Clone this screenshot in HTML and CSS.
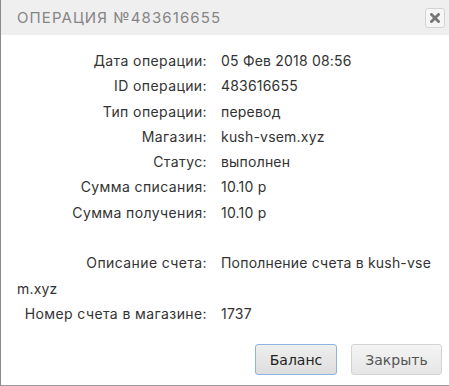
FILE: index.html
```html
<!DOCTYPE html>
<html>
<head>
<meta charset="utf-8">
<link rel="stylesheet" href="styles.css">
</head>
<body>
<div class="dialog">
  <div class="titlebar">
    <span class="title">ОПЕРАЦИЯ №483616655</span>
    <button class="close" aria-label="close"><svg width="10" height="10" viewBox="0 0 10 10"><path d="M1.5 1.5 L8.5 8.5 M8.5 1.5 L1.5 8.5" stroke="#777" stroke-width="2.8" stroke-linecap="square"/></svg></button>
  </div>
  <div class="content">
    <div class="row"><span class="label">Дата операции:</span>05 Фев 2018 08:56</div>
    <div class="row"><span class="label">ID операции:</span>483616655</div>
    <div class="row"><span class="label">Тип операции:</span>перевод</div>
    <div class="row"><span class="label">Магазин:</span>kush-vsem.xyz</div>
    <div class="row"><span class="label">Статус:</span>выполнен</div>
    <div class="row"><span class="label">Сумма списания:</span>10.10 р</div>
    <div class="row"><span class="label">Сумма получения:</span>10.10 р</div>
    <div class="row empty"></div>
    <div class="row"><span class="label">Описание счета:</span>Пополнение счета в kush-vsem.xyz</div>
    <div class="row"><span class="label">Номер счета в магазине:</span>1737</div>
  </div>
  <div class="buttons">
    <button class="btn primary">Баланс</button>
    <button class="btn">Закрыть</button>
  </div>
</div>
</body>
</html>
```
FILE: styles.css
```css
html, body { margin: 0; padding: 0; background: #fff; }
.dialog {
  width: 449px;
  height: 386px;
  box-sizing: border-box;
  border-left: 1px solid #8a8a8a;
  border-bottom: 1px solid #9a9a9a;
  display: flex;
  flex-direction: column;
  font-family: Inter, "Noto Sans", sans-serif;
}
.titlebar {
  height: 35px;
  background: #efefef;
  display: flex;
  align-items: center;
  justify-content: space-between;
  padding: 0 4px 0 16px;
}
.title {
  font-size: 15px;
  letter-spacing: 1.1px;
  color: #858585;
  font-weight: 400;
}
.close {
  width: 20px;
  height: 20px;
  padding: 0;
  border: 1px solid #d3d3d3;
  border-radius: 3px;
  background: #f6f6f6;
  display: flex;
  align-items: center;
  justify-content: center;
}
.content {
  padding: 13px 14px 0 16px;
  font-size: 14px;
  letter-spacing: 0.2px;
  color: #333;
  flex: 1;
}
.row {
  line-height: 25.3px;
  word-break: break-all;
}
.row.empty { height: 25.3px; }
.label {
  display: inline-block;
  vertical-align: top;
  width: 190px;
  text-align: right;
  padding-right: 14px;
  color: #333;
  letter-spacing: 0.4px;
}
.buttons {
  display: flex;
  justify-content: flex-end;
  gap: 14px;
  padding: 0 7px 10px 0;
}
.btn {
  height: 31px;
  padding: 0 12px;
  font-family: "DejaVu Sans", sans-serif;
  font-size: 14px;
  color: #555;
  border: 1px solid #d3d3d3;
  border-radius: 3px;
  background: linear-gradient(#f4f4f4, #e6e6e6);
}
.btn.primary {
  width: 82px;
  color: #222;
  border-color: #8fb3e0;
  background: linear-gradient(#eeeeee, #dedede);
}
.btn:not(.primary) { width: 91px; }
```
